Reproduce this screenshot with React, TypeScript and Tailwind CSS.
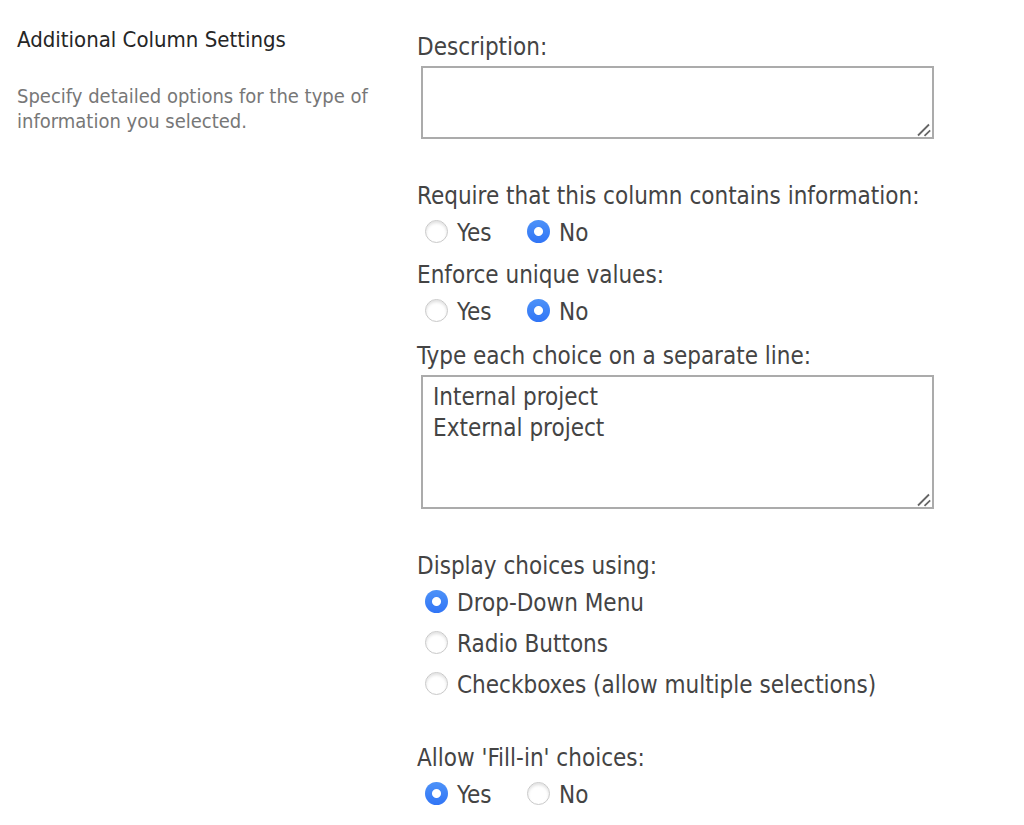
import React from "react";

interface RadioProps {
  name: string;
  label: string;
  defaultChecked?: boolean;
}

const Radio: React.FC<RadioProps> = ({ name, label, defaultChecked }) => {
  return (
    <label className="flex items-start gap-[9px] leading-8">
      <input
        type="radio"
        name={name}
        defaultChecked={defaultChecked}
        className="mt-[3px] size-[23px] shrink-0 appearance-none rounded-full border border-[#c9c9c9] bg-white shadow-[inset_0_2px_3px_rgba(0,0,0,0.12)] checked:border-0 checked:bg-[radial-gradient(circle,#fff_4px,transparent_5px),linear-gradient(#4d92f8,#3175f6)] checked:shadow-none"
      />
      {label}
    </label>
  );
};

interface TextBoxProps {
  id: string;
  label: string;
  height: string;
  defaultValue?: string;
}

const TextBox: React.FC<TextBoxProps> = ({ id, label, height, defaultValue }) => {
  return (
    <div>
      <label htmlFor={id} className="block leading-8">
        {label}
      </label>
      <div className="relative ml-1 mt-[3px]">
        <textarea
          id={id}
          defaultValue={defaultValue}
          className={`block w-full resize-none border-2 border-[#ababab] bg-white px-[10px] pt-[5px] leading-[31px] outline-none ${height}`}
        />
        <svg
          className="pointer-events-none absolute bottom-[2px] right-[3px]"
          width="14"
          height="14"
          viewBox="0 0 14 14"
          stroke="#666"
          strokeWidth="1.8"
          aria-hidden="true"
        >
          <path d="M1 12.5L12 1.5M7.5 12.8L13.2 7.4" />
        </svg>
      </div>
    </div>
  );
};

interface YesNoProps {
  name: string;
  label: string;
  value: "Yes" | "No";
}

const YesNo: React.FC<YesNoProps> = ({ name, label, value }) => {
  return (
    <fieldset>
      <legend className="leading-8">{label}</legend>
      <div className="ml-2 mt-[5px] grid grid-cols-[102px_1fr]">
        <Radio name={name} label="Yes" defaultChecked={value === "Yes"} />
        <Radio name={name} label="No" defaultChecked={value === "No"} />
      </div>
    </fieldset>
  );
};

const displayOptions = [
  "Drop-Down Menu",
  "Radio Buttons",
  "Checkboxes (allow multiple selections)",
];

const App: React.FC = () => {
  return (
    <main className="grid min-h-screen grid-cols-[400px_1fr] bg-white pl-[17px] pr-[90px] font-['DejaVu_Sans_Condensed','Noto_Sans',sans-serif] text-[24px] text-[#444]">
      <section className="pr-8 pt-6">
        <h1 className="text-[22px] leading-8 text-[#262626]">
          Additional Column Settings
        </h1>
        <p className="mt-7 text-[20px] leading-[25px] text-[#777]">
          Specify detailed options for the type of information you selected.
        </p>
      </section>

      <form className="flex flex-col gap-[41px] whitespace-nowrap pt-[31px]">
        <TextBox id="description" label="Description:" height="h-[73px]" />

        <div className="flex flex-col gap-3">
          <div className="flex flex-col gap-[10px]">
            <YesNo
              name="required"
              label="Require that this column contains information:"
              value="No"
            />
            <YesNo name="unique" label="Enforce unique values:" value="No" />
          </div>
          <TextBox
            id="choices"
            label="Type each choice on a separate line:"
            height="h-[134px]"
            defaultValue={"Internal project\nExternal project"}
          />
        </div>

        <fieldset>
          <legend className="leading-8">Display choices using:</legend>
          <div className="ml-2 mt-[5px] flex flex-col gap-[9px]">
            {displayOptions.map((option, idx) => (
              <Radio
                key={option}
                name="display"
                label={option}
                defaultChecked={idx === 0}
              />
            ))}
          </div>
        </fieldset>

        <YesNo name="fillin" label="Allow 'Fill-in' choices:" value="Yes" />
      </form>
    </main>
  );
};

export default App;
